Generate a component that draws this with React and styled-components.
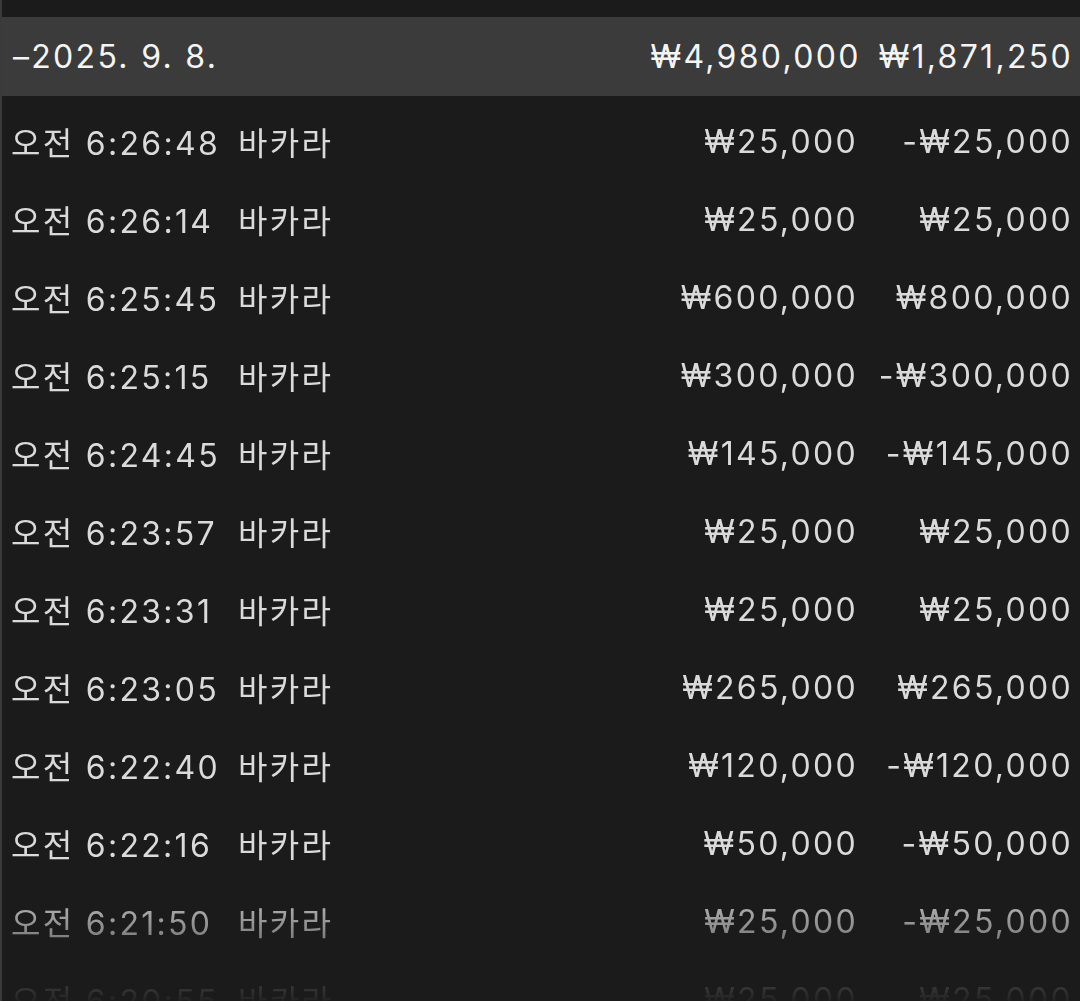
import styled, { createGlobalStyle } from "styled-components";

const rows = [
  ["오전 6:26:48", "바카라", "₩25,000", "-₩25,000"],
  ["오전 6:26:14", "바카라", "₩25,000", "₩25,000"],
  ["오전 6:25:45", "바카라", "₩600,000", "₩800,000"],
  ["오전 6:25:15", "바카라", "₩300,000", "-₩300,000"],
  ["오전 6:24:45", "바카라", "₩145,000", "-₩145,000"],
  ["오전 6:23:57", "바카라", "₩25,000", "₩25,000"],
  ["오전 6:23:31", "바카라", "₩25,000", "₩25,000"],
  ["오전 6:23:05", "바카라", "₩265,000", "₩265,000"],
  ["오전 6:22:40", "바카라", "₩120,000", "-₩120,000"],
  ["오전 6:22:16", "바카라", "₩50,000", "-₩50,000"],
  ["오전 6:21:50", "바카라", "₩25,000", "-₩25,000"],
  ["오전 6:20:55", "바카라", "₩25,000", "₩25,000"],
];

const GlobalStyle = createGlobalStyle`
  html, body {
    margin: 0;
    padding: 0;
    background: #1b1b1b;
  }
  body {
    font-family: Inter, "Noto Sans", "Noto Sans CJK KR", sans-serif;
  }
`;

const Screen = styled.div`
  height: 1001px;
  overflow: hidden;
  background: #1b1b1b;
  border-left: 2px solid #3a3a3a;
  box-sizing: border-box;
  padding-top: 17px;
`;

const Header = styled.div`
  height: 79px;
  background: #3b3b3b;
  display: grid;
  grid-template-columns: 1fr auto auto;
  align-items: center;
  column-gap: 18px;
  padding: 0 7px 0 11px;
  color: #f4f4f4;
  font-size: 32px;
  letter-spacing: 2.3px;
`;

// rows fade out toward the bottom edge
const List = styled.div`
  padding-top: 6px;
  -webkit-mask-image: linear-gradient(to bottom, #000 0, #000 780px, transparent 910px);
  mask-image: linear-gradient(to bottom, #000 0, #000 780px, transparent 910px);
`;

const Row = styled.div`
  height: 78px;
  display: grid;
  grid-template-columns: 227px 1fr auto 215px;
  align-items: center;
  padding: 0 7px 0 9px;
  color: #dadada;
  font-size: 32px;
  letter-spacing: 2.3px;
  white-space: nowrap;
`;

const Cell = styled.span`
  text-align: ${(p) => (p.$right ? "right" : "left")};
`;

const App = () => {
  return (
    <>
      <GlobalStyle />
      <Screen>
        <Header>
          <Cell>–2025. 9. 8.</Cell>
          <Cell $right>₩4,980,000</Cell>
          <Cell $right>₩1,871,250</Cell>
        </Header>
        <List>
          {rows.map((r) => (
            <Row key={r[0]}>
              <Cell>{r[0]}</Cell>
              <Cell>{r[1]}</Cell>
              <Cell $right>{r[2]}</Cell>
              <Cell $right>{r[3]}</Cell>
            </Row>
          ))}
        </List>
      </Screen>
    </>
  );
};

export default App;
